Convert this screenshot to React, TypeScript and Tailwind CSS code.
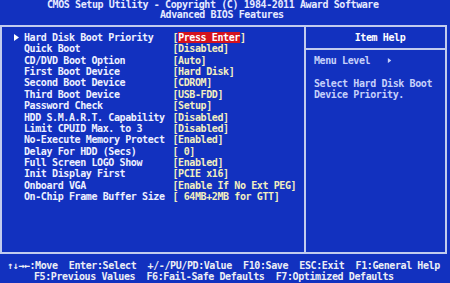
import React from 'react';

const items: { label: string; value: string; active?: boolean }[] = [
  { label: 'Hard Disk Boot Priority', value: 'Press Enter', active: true },
  { label: 'Quick Boot', value: '[Disabled]' },
  { label: 'CD/DVD Boot Option', value: '[Auto]' },
  { label: 'First Boot Device', value: '[Hard Disk]' },
  { label: 'Second Boot Device', value: '[CDROM]' },
  { label: 'Third Boot Device', value: '[USB-FDD]' },
  { label: 'Password Check', value: '[Setup]' },
  { label: 'HDD S.M.A.R.T. Capability', value: '[Disabled]' },
  { label: 'Limit CPUID Max. to 3', value: '[Disabled]' },
  { label: 'No-Execute Memory Protect', value: '[Enabled]' },
  { label: 'Delay For HDD (Secs)', value: '[ 0]' },
  { label: 'Full Screen LOGO Show', value: '[Enabled]' },
  { label: 'Init Display First', value: '[PCIE x16]' },
  { label: 'Onboard VGA', value: '[Enable If No Ext PEG]' },
  { label: 'On-Chip Frame Buffer Size', value: '[ 64MB+2MB for GTT]' },
];

const keys1 = ['↑↓→←:Move', 'Enter:Select', '+/-/PU/PD:Value', 'F10:Save', 'ESC:Exit', 'F1:General Help'];
const keys2 = ['F5:Previous Values', 'F6:Fail-Safe Defaults', 'F7:Optimized Defaults'];

const Arrow = ({ className }: { className?: string }) => (
  <svg width="5" height="7" viewBox="0 0 5 7" className={className}>
    <path d="M0 0 L5 3.5 L0 7 Z" fill="currentColor" />
  </svg>
);

const App = () => {
  return (
    <div className="w-[450px] h-[283px] overflow-hidden bg-[#1231bf] text-[#e6eaff] font-['DejaVu_Sans_Mono',monospace] font-bold text-[10px] tracking-[-0.4px] leading-[11.36px] whitespace-pre">
      {/* title */}
      <div className="h-[25px]">
        <div className="pl-[47px] leading-[10px]">CMOS Setup Utility - Copyright (C) 1984-2011 Award Software</div>
        <div className="pl-[160px] leading-[10px]">Advanced BIOS Features</div>
      </div>

      {/* main frame */}
      <div className="w-[447px] h-[229px] border-2 border-[#c2cbee] flex">
        <div className="w-[302px] pt-[5px]">
          {items.map((it) => (
            <div key={it.label} className="flex h-[11.36px] items-center">
              <div className="w-[22px] pl-[12px] text-white">{it.active && <Arrow />}</div>
              <div className="w-[148.5px] text-[#eef0ff]">{it.label}</div>
              {it.active ? (
                <div className="text-[#f2efbf]">
                  [<span className="bg-[#d4121e] text-white">{it.value}</span>]
                </div>
              ) : (
                <div className="text-[#f2efbf]">{it.value}</div>
              )}
            </div>
          ))}
        </div>

        <div className="flex-1 border-l-2 border-[#c2cbee] flex flex-col">
          <div className="h-[21px] flex items-center justify-center pl-[9px] text-white">Item Help</div>
          <div className="border-t-2 border-[#c2cbee] pt-[5px] pl-[8px] text-[#c6d0fa]">
            <div className="flex items-center h-[11.36px]">
              Menu Level   <Arrow className="text-[#c6d0fa] scale-75" />
            </div>
            <div className="h-[11.36px]" />
            <div>Select Hard Disk Boot</div>
            <div>Device Priority.</div>
          </div>
        </div>
      </div>

      {/* key help */}
      <div className="pt-[6px] text-[#eceef6]">
        <div className="flex gap-[11.25px] pl-[7px]">
          {keys1.map((k) => (
            <span key={k}>{k}</span>
          ))}
        </div>
        <div className="flex gap-[11.25px] pl-[34px]">
          {keys2.map((k) => (
            <span key={k}>{k}</span>
          ))}
        </div>
      </div>
    </div>
  );
};

export default App;
